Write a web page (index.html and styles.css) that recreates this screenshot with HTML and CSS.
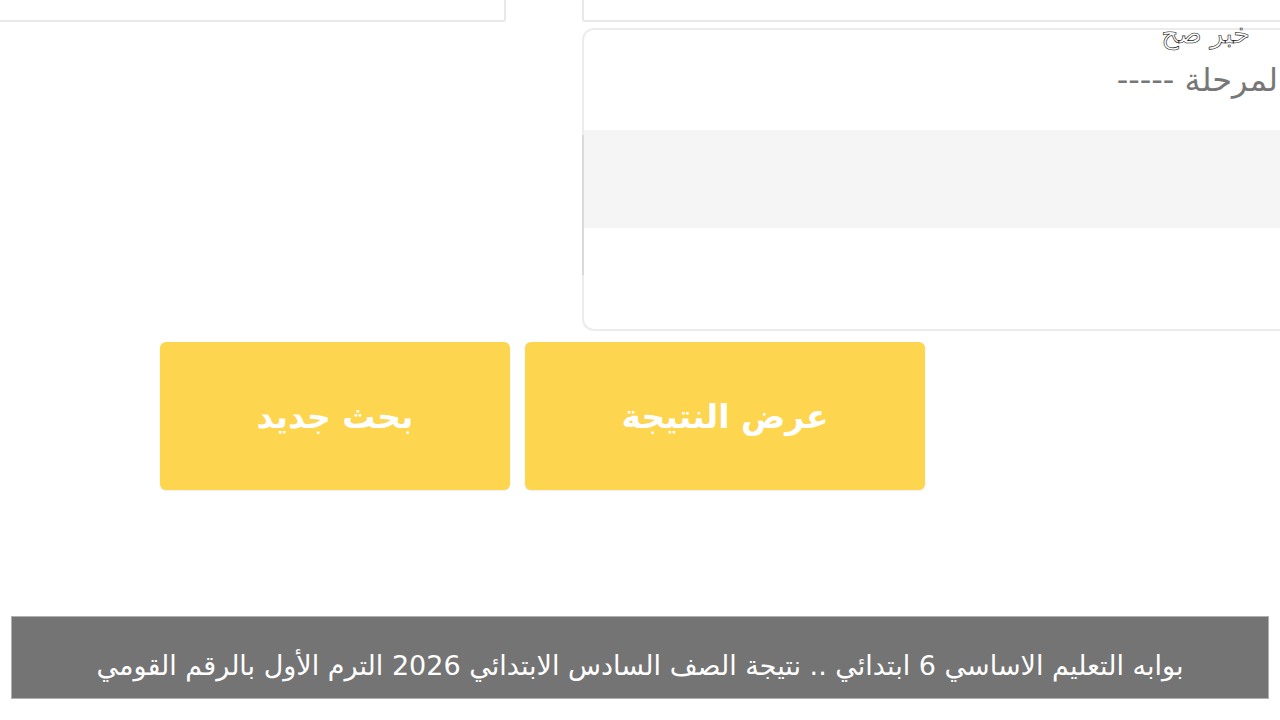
FILE: index.html
```html
<!DOCTYPE html>
<html lang="ar" dir="rtl">
<head>
<meta charset="utf-8">
<title>نتيجة الصف السادس الابتدائي</title>
<link rel="stylesheet" href="styles.css">
</head>
<body>
<div class="page">
  <div class="top-row">
    <div class="top-box top-box-right"></div>
    <div class="top-box top-box-left"></div>
  </div>
  <div class="card">
    <div class="card-label">لمرحلة -----</div>
    <div class="card-stripe"></div>
  </div>
  <div class="buttons">
    <div class="btn btn-result">عرض النتيجة</div>
    <div class="btn btn-new">بحث جديد</div>
  </div>
  <div class="caption">بوابه التعليم الاساسي 6 ابتدائي .. نتيجة الصف السادس الابتدائي 2026 الترم الأول بالرقم القومي</div>
  <div class="watermark">خبر صح</div>
</div>
</body>
</html>
```
FILE: styles.css
```css
* { box-sizing: border-box; }
html, body { margin: 0; padding: 0; background: #fff; }
body {
  width: 1280px;
  height: 720px;
  overflow: hidden;
  font-family: "DejaVu Sans", "Noto Sans", sans-serif;
}
.page {
  position: relative;
  width: 1280px;
  height: 720px;
  display: flex;
  flex-direction: column;
  align-items: flex-start; /* = right edge in rtl */
}
.top-row {
  display: flex;
  width: 1280px;
  height: 22px;
  justify-content: space-between;
}
.top-box {
  height: 22px;
  border-bottom: 2px solid #e8e8e8;
  background: #fff;
}
.top-box-right {
  width: 698px;
  border-left: 2px solid #e8e8e8;
  border-bottom-left-radius: 3px;
}
.top-box-left {
  width: 506px;
  border-right: 2px solid #e8e8e8;
  border-bottom-right-radius: 3px;
}
.card {
  margin-top: 6px;
  width: 698px;
  height: 303px;
  border: 2px solid #ececec;
  border-right: none;
  border-radius: 12px 0 0 12px;
  position: relative;
  display: flex;
  flex-direction: column;
  padding-top: 30px;
}
.card::after {
  content: "";
  position: absolute;
  left: -2px;
  top: 105px;
  height: 140px;
  width: 2px;
  background: #dadada;
}
.card-label {
  font-size: 32px;
  color: #777;
  line-height: 40px;
  padding-right: 2px;
  white-space: nowrap;
}
.card-stripe {
  margin-top: 30px;
  height: 98px;
  background: #f5f5f5;
}
.buttons {
  display: flex;
  gap: 15px;
  margin-top: 11px;
  margin-right: 355px;
  height: 148px;
}
.btn {
  height: 148px;
  background: #fdd54e;
  border-radius: 6px;
  box-shadow: 0 1px 2px rgba(0,0,0,0.08);
  color: #fff;
  font-weight: bold;
  font-size: 33px;
  display: flex;
  align-items: center;
  justify-content: center;
}
.btn-result { width: 400px; }
.btn-new { width: 350px; }
.caption {
  margin: 126px 11px 0 11px;
  width: 1258px;
  height: 83px;
  background: #747474;
  border: 1px solid #b0b0b0;
  color: #fff;
  font-size: 27px;
  text-align: center;
  padding-top: 32px;
  line-height: 34px;
  white-space: nowrap;
}
.watermark {
  position: absolute;
  top: 16px;
  right: 30px;
  font-size: 27px;
  color: #fff;
  -webkit-text-stroke: 0.6px #111;
  line-height: 36px;
}
```
